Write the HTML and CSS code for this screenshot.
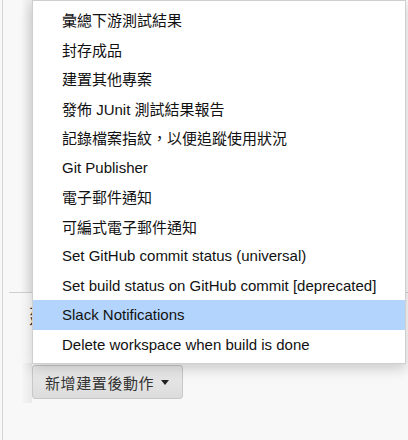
FILE: index.html
```html
<!DOCTYPE html>
<html>
<head>
<meta charset="utf-8">
<link rel="stylesheet" href="styles.css">
</head>
<body>
<div class="frame">
  <div class="content">
    <div class="upper">
      <div class="rail"></div>
    </div>
    <div class="section">
      <h2 class="heading"><span class="zh">建置後動作</span></h2>
    </div>
    <div class="actions">
      <div class="rail rail-short"></div>
      <button class="add-btn"><span class="zh btn-zh">新增建置後動作</span><span class="caret"></span></button>
    </div>
  </div>
  <ul class="menu">
    <li class="item"><span class="zh">彙總下游測試結果</span></li>
    <li class="item"><span class="zh">封存成品</span></li>
    <li class="item"><span class="zh">建置其他專案</span></li>
    <li class="item"><span class="zh">發佈</span> JUnit <span class="zh">測試結果報告</span></li>
    <li class="item"><span class="zh">記錄檔案指紋，以便追蹤使用狀況</span></li>
    <li class="item">Git Publisher</li>
    <li class="item"><span class="zh">電子郵件通知</span></li>
    <li class="item"><span class="zh">可編式電子郵件通知</span></li>
    <li class="item">Set GitHub commit status (universal)</li>
    <li class="item">Set build status on GitHub commit [deprecated]</li>
    <li class="item selected">Slack Notifications</li>
    <li class="item">Delete workspace when build is done</li>
  </ul>
</div>
</body>
</html>
```
FILE: styles.css
```css
html, body {
  margin: 0;
  padding: 0;
}
body {
  width: 408px;
  height: 440px;
  overflow: hidden;
  background: #f8f8f8;
  font-family: "Liberation Sans", Arial, "Noto Sans CJK TC", sans-serif;
  color: #111;
}
.frame {
  position: relative;
  margin-left: 2px;
  height: 440px;
  border-left: 1px solid #d4d4d4;
}
.content {
  display: flex;
  flex-direction: column;
}
.upper {
  height: 292px;
  border-bottom: 1px solid #cfcfcf;
  margin-left: 6px;
  padding-left: 13px;
}
.rail {
  width: 10px;
  height: 100%;
  background: linear-gradient(to right, #f6f6f6, #e9e9e9);
}
.section {
  height: 70px;
  padding-left: 26px;
}
.heading {
  margin: 8px 0 0;
  font-size: 20px;
  font-weight: normal;
  color: #333;
  font-family: "Noto Sans CJK TC", sans-serif;
}
.actions {
  display: flex;
  align-items: flex-start;
  padding-left: 19px;
  height: 40px;
}
.rail-short {
  height: 40px;
}
.add-btn {
  margin-top: 2px;
  height: 34px;
  display: flex;
  align-items: center;
  padding: 0 13px 0 12px;
  border: 1px solid #c8c8c8;
  border-radius: 3px;
  background: linear-gradient(to bottom, #ececec, #dcdcdc);
  font-family: "Liberation Sans", "Noto Sans CJK TC", sans-serif;
  font-size: 15px;
  color: #333;
}
.btn-zh {
  letter-spacing: 0.6px;
}
.caret {
  margin-left: 7px;
  width: 0;
  height: 0;
  border-left: 4px solid transparent;
  border-right: 4px solid transparent;
  border-top: 5px solid #222;
}
.zh {
  font-family: "Noto Sans CJK TC", sans-serif;
}
.menu {
  position: absolute;
  left: 29px;
  top: 0;
  width: 372px;
  margin: 0;
  padding: 4px 0 4px;
  list-style: none;
  background: #fff;
  border: 1px solid #cfcfcf;
  box-shadow: 0 5px 12px rgba(0, 0, 0, 0.18);
  font-size: 15px;
}
.item {
  height: 29.5px;
  line-height: 29.5px;
  padding-left: 29px;
  white-space: nowrap;
}
.selected {
  background: #b3d5fd;
}
```
